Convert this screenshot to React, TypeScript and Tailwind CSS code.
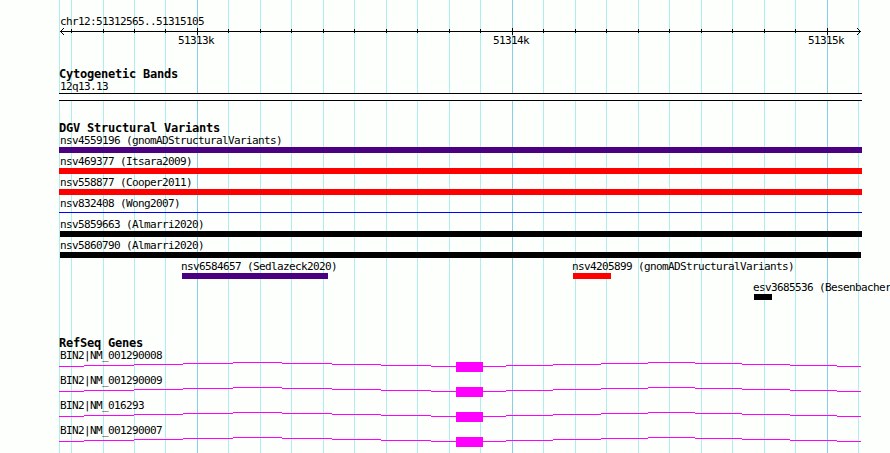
const FONT = "font-['DejaVu_Sans_Mono','Liberation_Mono',monospace]";

const MAJOR = [197, 512, 827];
const MINOR = [
  71, 103, 134, 165, 228, 260, 291, 323, 354, 386, 417, 449, 480, 543, 575,
  606, 638, 669, 701, 732, 764, 795, 858,
];

type Variant = {
  name: string;
  start: number;
  width: number;
  color: string;
  thin?: boolean;
};

// each inner list is one row of the track, start is the left edge in px
const VARIANT_ROWS: Variant[][] = [
  [{ name: "nsv4559196 (gnomADStructuralVariants)", start: 59, width: 803, color: "bg-[#4b0082]" }],
  [{ name: "nsv469377 (Itsara2009)", start: 59, width: 803, color: "bg-[#ff0000]" }],
  [{ name: "nsv558877 (Cooper2011)", start: 59, width: 803, color: "bg-[#ff0000]" }],
  [{ name: "nsv832408 (Wong2007)", start: 59, width: 803, color: "bg-[#0000ff]", thin: true }],
  [{ name: "nsv5859663 (Almarri2020)", start: 60, width: 802, color: "bg-black" }],
  [{ name: "nsv5860790 (Almarri2020)", start: 60, width: 801, color: "bg-black" }],
  [
    { name: "nsv6584657 (Sedlazeck2020)", start: 182, width: 146, color: "bg-[#4b0082]" },
    { name: "nsv4205899 (gnomADStructuralVariants)", start: 573, width: 38, color: "bg-[#ff0000]" },
  ],
  [{ name: "esv3685536 (Besenbacher", start: 754, width: 18, color: "bg-black" }],
];

const GENES = [
  "BIN2|NM_001290008",
  "BIN2|NM_001290009",
  "BIN2|NM_016293",
  "BIN2|NM_001290007",
];

// intron steps: [x1, x2, y]
const INTRON = [
  [59, 84, 4], [84, 134, 3], [134, 183, 2], [183, 233, 1], [233, 282, 0],
  [282, 332, 1], [332, 381, 2], [381, 431, 3], [431, 456, 4],
  [483, 506, 4], [506, 553, 3], [553, 601, 2], [601, 648, 1], [648, 695, 0],
  [695, 742, 1], [742, 790, 2], [790, 837, 3], [837, 861, 4],
];

function GridLines() {
  return (
    <svg
      className="absolute inset-0"
      width={890}
      height={453}
      shapeRendering="crispEdges"
    >
      {[59, ...MINOR].map((x) => (
        <rect key={x} x={x} y={0} width={1} height={453} fill="#afeeee" />
      ))}
      {MAJOR.map((x) => (
        <rect key={x} x={x} y={0} width={1} height={453} fill="#87ceeb" />
      ))}
    </svg>
  );
}

function Label({ children }: { children: string }) {
  return (
    <div className="h-3 text-[11px] leading-3 tracking-[-0.622px] whitespace-pre">
      {children}
    </div>
  );
}

function TrackTitle({ children }: { children: string }) {
  return (
    <h2 className="h-[13px] pl-[59px] text-[12px] leading-3 font-bold tracking-[-0.224px] whitespace-pre">
      {children}
    </h2>
  );
}

function Ruler() {
  return (
    <div className="h-[68px] pt-4">
      <div className="pl-[60px]">
        <Label>chr12:51312565..51315105</Label>
      </div>
      <svg
        className="block"
        width={890}
        height={7}
        shapeRendering="crispEdges"
      >
        <rect x={60} y={3} width={801} height={1} />
        {MINOR.slice(0, -1).map((x) => (
          <rect key={x} x={x} y={1} width={1} height={4} />
        ))}
        {MAJOR.map((x) => (
          <rect key={x} x={x} y={0} width={1} height={7} />
        ))}
        {[1, 2, 3].map((i) => (
          <g key={i}>
            <rect x={60 + i} y={3 - i} width={1} height={1} />
            <rect x={60 + i} y={3 + i} width={1} height={1} />
            <rect x={860 - i} y={3 - i} width={1} height={1} />
            <rect x={860 - i} y={3 + i} width={1} height={1} />
          </g>
        ))}
      </svg>
      <div className="flex gap-[279px] pl-[178px]">
        <Label>51313k</Label>
        <Label>51314k</Label>
        <Label>51315k</Label>
      </div>
    </div>
  );
}

function VariantRow({ items }: { items: Variant[] }) {
  return (
    <div className="grid h-[21px]">
      {items.map((v) => (
        <div key={v.name} className="col-start-1 row-start-1">
          <div style={{ paddingLeft: Math.max(v.start - 1, 60) }}>
            <Label>{v.name}</Label>
          </div>
          <div
            className={`${v.color} ${v.thin ? "mt-0.5 h-px" : "h-1.5"}`}
            style={{ marginLeft: v.start, width: v.width }}
          />
        </div>
      ))}
    </div>
  );
}

function GeneRow({ name }: { name: string }) {
  return (
    <div className="h-[25px]">
      <div className="pl-[60px]">
        <Label>{name}</Label>
      </div>
      <svg
        className="block"
        width={890}
        height={10}
        fill="#ff00ff"
        shapeRendering="crispEdges"
      >
        {INTRON.map(([x1, x2, y]) => (
          <rect key={x1} x={x1} y={y} width={x2 - x1} height={1} />
        ))}
        <rect x={456} y={0} width={27} height={10} />
      </svg>
    </div>
  );
}

export default function App() {
  return (
    <div
      className={`relative h-[453px] w-[890px] overflow-hidden bg-[#fdfffc] text-black ${FONT}`}
    >
      <GridLines />
      <div className="relative">
        <Ruler />
        <section className="h-[54px]">
          <TrackTitle>Cytogenetic Bands</TrackTitle>
          <div className="pl-[60px]">
            <Label>12q13.13</Label>
          </div>
          <div className="ml-[59px] h-2 w-[803px] border-y border-black bg-white" />
        </section>
        <section className="h-[215px]">
          <TrackTitle>DGV Structural Variants</TrackTitle>
          {VARIANT_ROWS.map((items) => (
            <VariantRow key={items[0].name} items={items} />
          ))}
        </section>
        <section>
          <TrackTitle>RefSeq Genes</TrackTitle>
          {GENES.map((name) => (
            <GeneRow key={name} name={name} />
          ))}
        </section>
      </div>
    </div>
  );
}
